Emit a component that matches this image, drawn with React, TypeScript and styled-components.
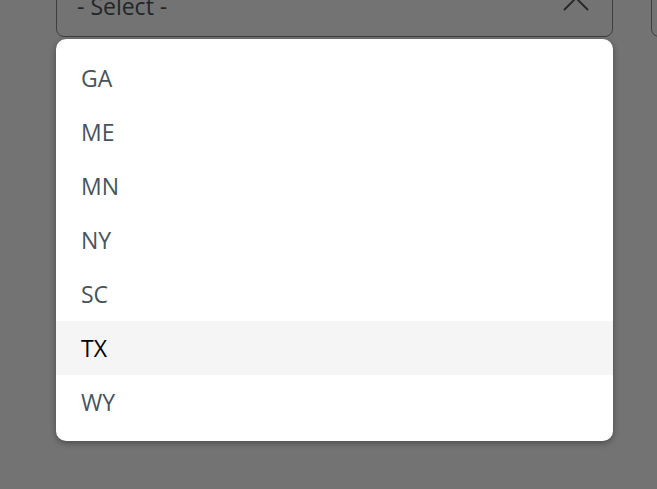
import React from "react";
import styled, { createGlobalStyle } from "styled-components";

const Global = createGlobalStyle`
  html, body { margin: 0; padding: 0; background: #ffffff; }
  body { font-family: "Open Sans", "Noto Sans", sans-serif; overflow: hidden; }
  #root { width: 657px; height: 489px; position: relative; overflow: hidden; }
`;

const Page = styled.div`
  position: relative;
  width: 657px;
  height: 489px;
  overflow: hidden;
  background: #ffffff;
`;

const FieldRow = styled.div`
  display: flex;
  gap: 38px;
  padding-left: 56px;
  margin-top: -20px;
`;

const Field = styled.div<{ $w: number }>`
  box-sizing: border-box;
  flex: 0 0 ${(p) => p.$w}px;
  height: 57px;
  border: 1px solid #8a8a8a;
  border-radius: 8px;
  display: flex;
  align-items: center;
  justify-content: space-between;
  padding: 0 22px 0 20px;
  font-size: 23px;
  color: #4a555a;
`;

const FieldText = styled.span`
  margin-top: -6px;
`;

const Chevron = styled.svg`
  margin-top: -10px;
`;

const Overlay = styled.div`
  position: absolute;
  inset: 0;
  background: rgba(0, 0, 0, 0.55);
`;

const Menu = styled.ul`
  position: absolute;
  top: 39px;
  left: 56px;
  width: 557px;
  box-sizing: border-box;
  margin: 0;
  padding: 12px 0;
  list-style: none;
  background: #ffffff;
  border-radius: 10px;
  box-shadow: 0 2px 6px rgba(0, 0, 0, 0.35);
`;

const Item = styled.li<{ $active?: boolean }>`
  height: 54px;
  display: flex;
  align-items: center;
  padding: 0 25px;
  font-size: 23px;
  color: ${(p) => (p.$active ? "#000000" : "#47555a")};
  background: ${(p) => (p.$active ? "#f5f5f5" : "transparent")};
`;

const states = ["GA", "ME", "MN", "NY", "SC", "TX", "WY"];

export default function App() {
  return (
    <Page>
      <Global />
      <FieldRow>
        <Field $w={557}>
          <FieldText>- Select -</FieldText>
          <Chevron width="28" height="16" viewBox="0 0 28 16">
            <path d="M2 14 L14 2 L26 14" fill="none" stroke="#4a555a" strokeWidth="1.8" />
          </Chevron>
        </Field>
        <Field $w={200} />
      </FieldRow>
      <Overlay />
      <Menu>
        {states.map((s) => (
          <Item key={s} $active={s === "TX"}>
            {s}
          </Item>
        ))}
      </Menu>
    </Page>
  );
}
